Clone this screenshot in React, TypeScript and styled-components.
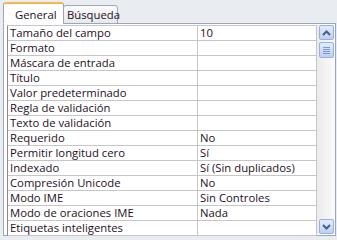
import styled, { createGlobalStyle } from "styled-components";

const GlobalStyle = createGlobalStyle`
  html, body {
    margin: 0;
    padding: 0;
    background: #e9ecf1;
  }
  body {
    font-family: "Segoe UI", "Open Sans", "Noto Sans", sans-serif;
  }
`;

const properties: [string, string][] = [
  ["Tamaño del campo", "10"],
  ["Formato", ""],
  ["Máscara de entrada", ""],
  ["Título", ""],
  ["Valor predeterminado", ""],
  ["Regla de validación", ""],
  ["Texto de validación", ""],
  ["Requerido", "No"],
  ["Permitir longitud cero", "Sí"],
  ["Indexado", "Sí (Sin duplicados)"],
  ["Compresión Unicode", "No"],
  ["Modo IME", "Sin Controles"],
  ["Modo de oraciones IME", "Nada"],
  ["Etiquetas inteligentes", ""],
];

export default function App() {
  return (
    <>
      <GlobalStyle />
      <Window>
        <TabStrip>
          <Tab $active>General</Tab>
          <Tab>Búsqueda</Tab>
        </TabStrip>
        <Panel>
          <Sheet>
            <Grid>
              {properties.map(([label, value]) => (
                <Row key={label}>
                  <Cell>{label}</Cell>
                  <Cell>{value}</Cell>
                </Row>
              ))}
            </Grid>
            <ScrollBar>
              <ScrollButton>
                <svg width="9" height="6" viewBox="0 0 9 6">
                  <path d="M1 5 L4.5 1.5 L8 5" fill="none" stroke="#4a5f86" strokeWidth="2" />
                </svg>
              </ScrollButton>
              <Thumb>
                <Grip />
                <Grip />
                <Grip />
                <Grip />
              </Thumb>
              <Track />
              <ScrollButton>
                <svg width="9" height="6" viewBox="0 0 9 6">
                  <path d="M1 1 L4.5 4.5 L8 1" fill="none" stroke="#4a5f86" strokeWidth="2" />
                </svg>
              </ScrollButton>
            </ScrollBar>
          </Sheet>
        </Panel>
      </Window>
    </>
  );
}

const Window = styled.div`
  width: 332px;
  padding: 3px 0 0 3px;
`;

const TabStrip = styled.div`
  display: flex;
  align-items: flex-end;
  height: 21px;
  position: relative;
  z-index: 1;
  margin-bottom: -1px;
`;

const Tab = styled.div<{ $active?: boolean }>`
  box-sizing: border-box;
  height: ${({ $active }) => ($active ? "22px" : "19px")};
  padding: ${({ $active }) => ($active ? "3px 10px 0 11px" : "1px 3px 0 3px")};
  margin-left: ${({ $active }) => ($active ? "0" : "-1px")};
  width: ${({ $active }) => ($active ? "61px" : "55px")};
  font-size: 11.3px;
  line-height: 15px;
  color: #1e0f24;
  border: 1px solid #9aa7b8;
  border-bottom: ${({ $active }) => ($active ? "1px solid #fff" : "1px solid #9aa7b8")};
  border-top: ${({ $active }) => ($active ? "2px solid #f2b64a" : "1px solid #9aa7b8")};
  border-radius: 3px 3px 0 0;
  background: ${({ $active }) =>
    $active ? "#ffffff" : "linear-gradient(#fbfbfb, #e6e8ec)"};
  white-space: nowrap;
`;

const Panel = styled.div`
  box-sizing: border-box;
  width: 333px;
  height: 213px;
  background: #ffffff;
  border: 1px solid #9aa7b8;
  padding: 1px 0 0 3px;
`;

const Sheet = styled.div`
  display: flex;
`;

const Grid = styled.div`
  border-left: 1px solid #8c8c8c;
  border-top: 1px solid #c6c6c6;
  width: 309px;
`;

const Row = styled.div`
  display: grid;
  grid-template-columns: 190px 119px;
  height: 15px;
  box-sizing: border-box;
  border-bottom: 1px solid #c6c6c6;
`;

const Cell = styled.div`
  font-size: 11.3px;
  line-height: 14px;
  color: #1e0f24;
  padding-left: 2px;
  white-space: nowrap;
  overflow: hidden;
  border-right: 1px solid #c6c6c6;
`;

const ScrollBar = styled.div`
  display: flex;
  flex-direction: column;
  width: 18px;
  height: 209px;
  padding: 0 1px 0 2px;
  box-sizing: border-box;
  background: linear-gradient(to right, #ebebeb, #fbfbfb);
`;

const ScrollButton = styled.div`
  box-sizing: border-box;
  width: 15px;
  height: 15px;
  border: 1px solid #98b0dc;
  border-radius: 2px;
  background: linear-gradient(#e3ecfc, #bcd0f4);
  display: flex;
  align-items: center;
  justify-content: center;
`;

const Thumb = styled(ScrollButton)`
  margin-top: 2px;
  height: 16px;
  flex-direction: column;
  gap: 1px;
`;

const Grip = styled.div`
  width: 7px;
  height: 1px;
  background: #7f97c6;
`;

const Track = styled.div`
  flex: 1;
`;
